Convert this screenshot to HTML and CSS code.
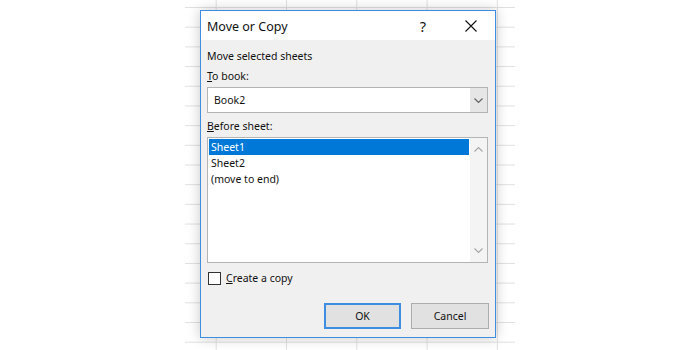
FILE: index.html
```html
<!DOCTYPE html>
<html lang="en">
<head>
    <meta charset="UTF-8">
    <title>Move or Copy</title>
    <link rel="stylesheet" href="styles.css">
</head>
<body>

    <div class="sheet">
        <div class="dialog">
            <div class="titlebar">
                <span class="title">Move or Copy</span>
                <span class="help">?</span>
                <span class="close">
                    <svg width="12" height="12" viewBox="0 0 12 12"><path d="M0.5 0.5L11.5 11.5M11.5 0.5L0.5 11.5" stroke="#111" stroke-width="1.1" fill="none"/></svg>
                </span>
            </div>

            <div class="content">
                <div class="caption">Move selected sheets</div>

                <div class="field-label"><u>T</u>o book:</div>
                <div class="combo">
                    <span class="combo-value">Book2</span>
                    <span class="combo-btn">
                        <svg width="9" height="5" viewBox="0 0 9 5"><path d="M0.5 0.5L4.5 4.5L8.5 0.5" stroke="#606060" stroke-width="1.1" fill="none"/></svg>
                    </span>
                </div>

                <div class="field-label"><u>B</u>efore sheet:</div>
                <div class="listbox">
                    <ul class="items">
                        <li class="selected">Sheet1</li>
                        <li>Sheet2</li>
                        <li>(move to end)</li>
                    </ul>
                    <div class="scrollbar">
                        <svg width="9" height="5" viewBox="0 0 9 5"><path d="M0.5 4.5L4.5 0.5L8.5 4.5" stroke="#a6a6a6" stroke-width="1.1" fill="none"/></svg>
                        <svg width="9" height="5" viewBox="0 0 9 5"><path d="M0.5 0.5L4.5 4.5L8.5 0.5" stroke="#a6a6a6" stroke-width="1.1" fill="none"/></svg>
                    </div>
                </div>

                <label class="check">
                    <span class="box"></span>
                    <span><u>C</u>reate a copy</span>
                </label>

                <div class="buttons">
                    <button class="btn default">OK</button>
                    <button class="btn">Cancel</button>
                </div>
            </div>
        </div>
    </div>

</body>
</html>
```

FILE: styles.css
```css
body {
    margin: 0;
    background-color: white;
    font-family: "Noto Sans", "Open Sans", sans-serif;
    color: #111;
}
.sheet {
    width: 330px;
    height: 350px;
    margin-left: 185px;
    padding-top: 10px;
    box-sizing: border-box;
    background-image:
        linear-gradient(to bottom, #e0e0e0 1px, transparent 1px),
        linear-gradient(to right, #e0e0e0 1px, transparent 1px);
    background-size: 100% 19.7px, 70.3px 100%;
    background-position: 0 7px, 30.7px 0;
}
.dialog {
    width: 296px;
    height: 328px;
    margin-left: 15px;
    box-sizing: border-box;
    border: 1px solid #3d8ee0;
    background-color: #f0f0f0;
    box-shadow: 0 0 12px rgba(0, 0, 0, 0.22);
    display: flex;
    flex-direction: column;
}
.titlebar {
    height: 29px;
    background-color: white;
    display: flex;
    align-items: center;
    padding-left: 6px;
}
.title {
    font-size: 12.5px;
    flex: 1;
    padding-top: 1px;
}
.help {
    font-size: 14.5px;
    width: 12px;
    text-align: center;
    margin-right: 36px;
}
.close {
    display: flex;
    margin-right: 18px;
}
.content {
    flex: 1;
    display: flex;
    flex-direction: column;
    padding: 8px 6px 8px 6px;
    font-size: 10.5px;
}
.caption,
.field-label {
    line-height: 16px;
}
.field-label {
    margin-top: 4px;
}
.combo {
    height: 26px;
    margin-top: 3px;
    margin-bottom: 1px;
    margin-right: 1px;
    box-sizing: border-box;
    border: 1px solid #b4b4b4;
    background-color: white;
    display: flex;
}
.combo-value {
    flex: 1;
    padding-left: 6px;
    line-height: 24px;
}
.combo-btn {
    width: 17px;
    background-color: #e6e6e6;
    display: flex;
    align-items: center;
    justify-content: center;
}
.listbox {
    height: 126px;
    margin-top: 3px;
    margin-right: 1px;
    box-sizing: border-box;
    border: 1px solid #b4b4b4;
    background-color: white;
    display: flex;
}
.items {
    flex: 1;
    list-style: none;
    margin: 0;
    padding: 1px 1px 0 1px;
}
.items li {
    line-height: 16px;
    padding-left: 2px;
}
.items li.selected {
    background-color: #0078d7;
    color: white;
}
.scrollbar {
    width: 17px;
    background-color: #f4f4f4;
    display: flex;
    flex-direction: column;
    align-items: center;
    justify-content: space-between;
    padding: 9px 0 9px 0;
}
.check {
    display: flex;
    align-items: center;
    gap: 5px;
    margin-top: 7px;
    line-height: 16px;
}
.box {
    width: 13px;
    height: 13px;
    box-sizing: border-box;
    border: 1px solid #333;
    background-color: white;
    margin-left: 1px;
}
.buttons {
    margin-top: auto;
    display: flex;
    justify-content: flex-end;
    gap: 10px;
}
.btn {
    width: 78px;
    height: 26px;
    font-family: inherit;
    font-size: 10.5px;
    color: #111;
    background-color: #e1e1e1;
    border: 1px solid #adadad;
    padding: 0;
}
.btn.default {
    width: 77px;
    border: 2px solid #3d8ee0;
}
```
